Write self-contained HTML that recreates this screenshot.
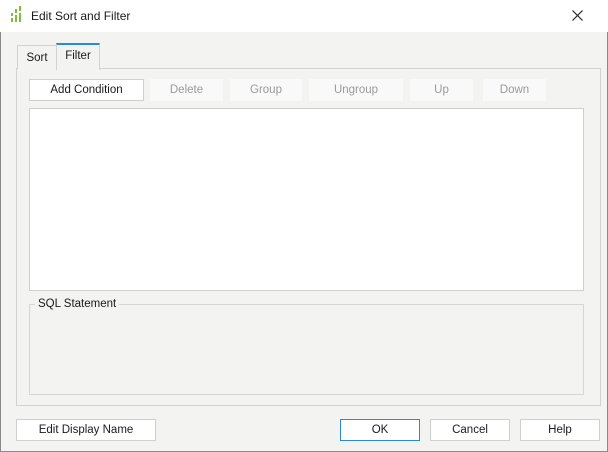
<!DOCTYPE html>
<html><head><meta charset="utf-8"><style>
*{box-sizing:border-box;margin:0;padding:0}
body{width:608px;height:452px;overflow:hidden;font-family:"Liberation Sans",sans-serif;font-size:11.5px;color:#1a1a1a;background:#f3f3f2;position:relative}
.win{position:absolute;left:0;top:0;width:608px;height:452px;border:1px solid #8a8a8a;border-top:none}
.title{position:absolute;left:0;top:0;width:608px;height:32px;background:#fff}
.title span{position:absolute;left:31px;top:9px;font-size:12px}
.abs{position:absolute}
.btn{position:absolute;height:22px;background:#fff;border:1px solid #cfcfcf;text-align:center;line-height:20px;font-size:11.5px}
.dis{background:#f9f9f9;border-color:#f9f9f9;color:#9a9a9a}
</style></head><body>
<div class="win"></div>
<div class="title">
<svg class="abs" style="left:10px;top:5px" width="14" height="19" viewBox="0 0 14 19">
<g fill="#7cbf3a"><rect x="1" y="8" width="2" height="3"/><rect x="1" y="13" width="2" height="4"/><rect x="5" y="4" width="2" height="4"/><rect x="5" y="10" width="2" height="7"/><rect x="9" y="1" width="2" height="5"/><rect x="9" y="8" width="2" height="9"/></g></svg>
<span>Edit Sort and Filter</span>
<svg class="abs" style="left:572px;top:10px" width="11" height="11" viewBox="0 0 11 11"><path d="M0.5 0.5L10.5 10.5M10.5 0.5L0.5 10.5" stroke="#222" stroke-width="1.2"/></svg>
</div>
<div class="abs" style="left:16px;top:68px;width:585px;height:338px;border:1px solid #d2d2d2;background:#f3f3f2"></div>
<div class="abs" style="left:17px;top:45px;width:40px;height:24px;border:1px solid #d2d2d2;border-bottom:none;background:#f3f3f2;text-align:center;line-height:24px">Sort</div>
<div class="abs" style="left:56px;top:43px;width:44px;height:27px;border:1px solid #d2d2d2;border-top:2px solid #2b8ad6;border-bottom:none;background:#f3f3f2;text-align:center;line-height:22px">Filter</div>
<div class="btn" style="left:29px;top:79px;width:115px">Add Condition</div>
<div class="btn dis" style="left:150px;top:79px;width:73px">Delete</div>
<div class="btn dis" style="left:230px;top:79px;width:72px">Group</div>
<div class="btn dis" style="left:309px;top:79px;width:94px">Ungroup</div>
<div class="btn dis" style="left:410px;top:79px;width:63px">Up</div>
<div class="btn dis" style="left:483px;top:79px;width:63px">Down</div>
<div class="abs" style="left:29px;top:108px;width:555px;height:183px;background:#fff;border:1px solid #cfcfcf"></div>
<div class="abs" style="left:29px;top:304px;width:555px;height:91px;border:1px solid #d6d6d6"></div>
<div class="abs" style="left:35px;top:298px;padding:0 3px;background:#f3f3f2">SQL Statement</div>
<div class="btn" style="left:16px;top:419px;width:140px">Edit Display Name</div>
<div class="btn" style="left:340px;top:419px;width:80px;border-color:#2b8ad6">OK</div>
<div class="btn" style="left:430px;top:419px;width:80px">Cancel</div>
<div class="btn" style="left:520px;top:419px;width:80px">Help</div>
</body></html>
